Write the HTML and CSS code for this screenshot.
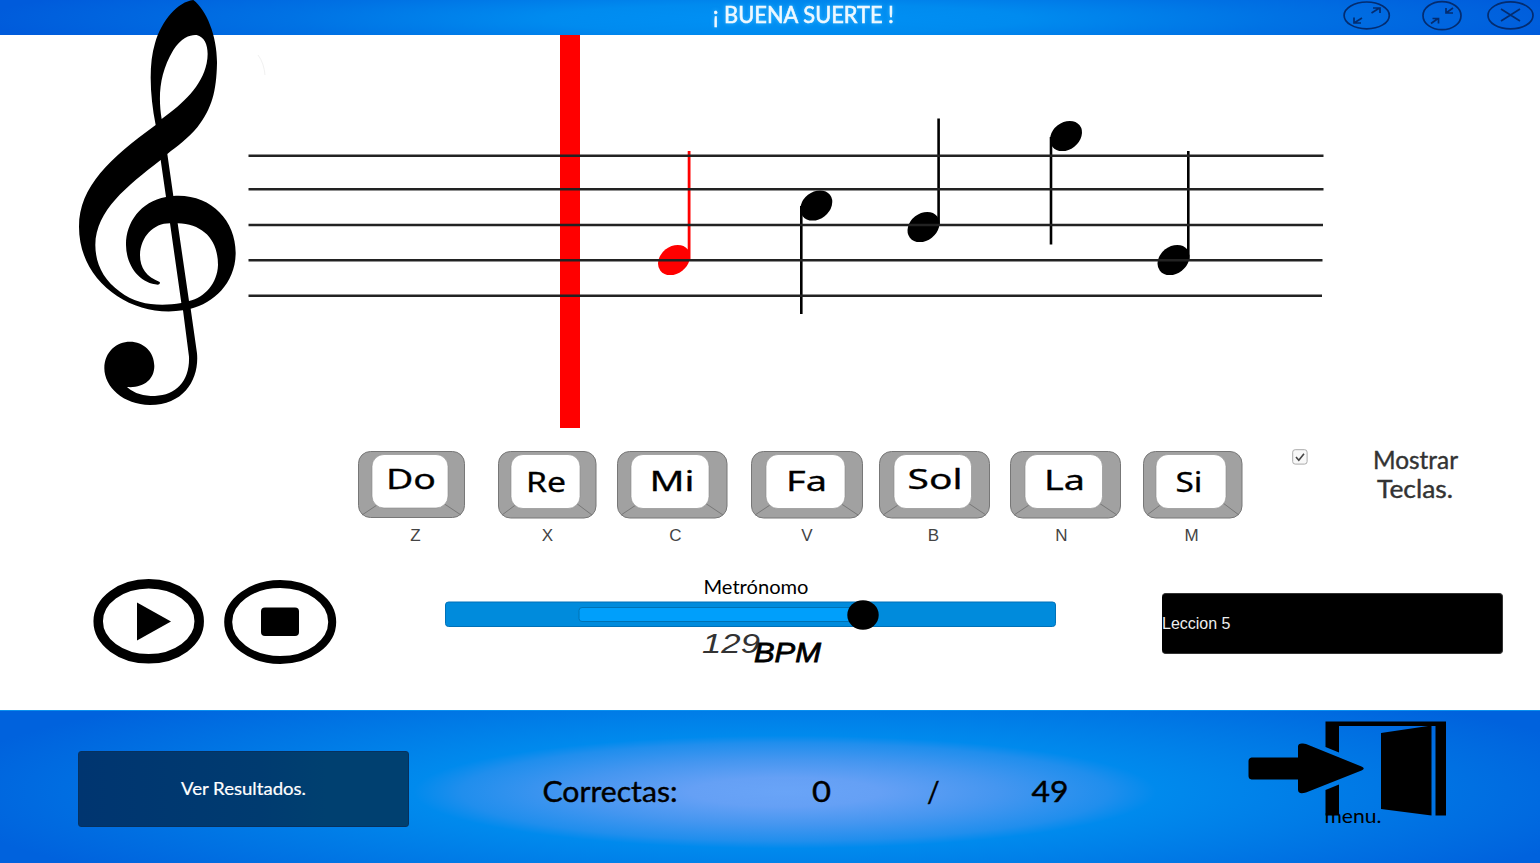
FILE: index.html
```html
<!DOCTYPE html>
<html lang="es">
<head>
<meta charset="utf-8">
<title>Lección de solfeo</title>
<link rel="stylesheet" href="styles.css">
</head>
<body>
<header class="topbar">
  <svg class="title" width="190" height="35" viewBox="709 0 190 35"><text x="713" y="22.5" textLength="181" lengthAdjust="spacingAndGlyphs">¡ BUENA SUERTE !</text></svg>
  <svg class="window-buttons" width="200" height="35" viewBox="1340 0 200 35">
    <ellipse cx="1366.7" cy="15.4" rx="22.6" ry="13.4"/>
    <path d="M1371.500 13l8-5M1373 8h7v5M1362 18l-8 5M1354 17.500v5.500h7"/>
    <ellipse cx="1442" cy="15.700" rx="19" ry="14"/>
    <path d="M1453 8l-7 5M1446 8v5h7M1431 23.500l7-5M1432.500 18.500h6v5"/>
    <ellipse cx="1510.500" cy="15.400" rx="22.500" ry="13.500"/>
    <path d="M1501 9l19 12M1520 9l-19 12"/>
  </svg>
</header>
<main>
  <svg class="score" width="1540" height="405" viewBox="0 35 1540 405">
    <rect x="560" y="35" width="20" height="393" fill="#f00"/>
    <path class="clef" transform="scale(.33333) translate(180 0)" fill-rule="evenodd" d="M400 0C440 30 472 110 471 190C469 275 456 325 412 382C385 415 350 440 322 462L340 588C450 580 528 660 527 760C526 850 460 910 392 926L411 1060C418 1135 375 1215 270 1215C190 1215 133 1160 133 1105C133 1055 170 1025 210 1025C250 1025 283 1055 283 1098C283 1139 250 1165 201 1161C225 1182 250 1188 285 1188C350 1186 390 1140 387 1070L369 931C220 955 57 850 57 680C57 560 150 475 287 375C270 290 265 195 285 130C305 60 355 5 400 0ZM305 357C294 290 298 220 340 150C365 110 395 103 410 105C440 112 448 150 440 190C425 260 370 310 305 357ZM302 480L318 591C240 605 197 670 198 735C199 800 240 850 294 854Q302 852 299 846C260 830 240 805 240 765C242 710 280 670 330 670L364 909C300 920 230 915 180 875C130 840 106 790 106 735C108 630 200 560 302 480ZM353 670C430 672 474 720 474 795C472 850 435 892 387 903Z"/>
    <g>
      <g fill="#f00"><ellipse transform="translate(674 260) rotate(-38)" rx="17.300" ry="13.500"/><path d="M687.700 151h2.800v108h-2.800z"/></g>
      <ellipse transform="translate(816.300 205.500) rotate(-38)" rx="17.300" ry="13.500"/><path d="M800 206h2.600v108H800z"/>
      <ellipse transform="translate(923.500 227) rotate(-38)" rx="17.300" ry="13.500"/><path d="M937.300 118.500h2.600V226h-2.600z"/>
      <ellipse transform="translate(1066 136) rotate(-38)" rx="17.300" ry="13.500"/><path d="M1049.700 137h2.600v107.500h-2.600z"/>
      <ellipse transform="translate(1173.500 260) rotate(-38)" rx="17.300" ry="13.500"/><path d="M1187 151h2.600v108h-2.600z"/>
    </g>
    <path class="staff" d="M248.500 155.800H1323.500M248.500 189.300H1323.500M248.500 225H1323M248.500 260.300H1322.500M248.500 295.700H1322"/>
    <path d="M258 55q6 8 7 20" fill="none" stroke="#f1f1f1"/>
  </svg>

  <section class="keys">
    <div class="key k-do"><svg width="107" height="68" viewBox="0 0 107 68"><rect class="cap" x=".5" y=".5" width="106" height="66" rx="12"/><path class="edge" d="M4 64l18-12M103 64l-18-12"/><rect class="face" x="14" y="3.500" width="76" height="53.500" rx="12"/><text x="28" y="38" textLength="50" lengthAdjust="spacingAndGlyphs">Do</text></svg><span>Z</span></div>
    <div class="key k-re"><svg width="99" height="68" viewBox="0 0 99 68"><rect class="cap" x=".5" y=".5" width="97.500" height="66.500" rx="12"/><path class="edge" d="M4 64l16-12M94 64l-16-12"/><rect class="face" x="13" y="3.500" width="69" height="54" rx="12"/><text x="28" y="41" textLength="40" lengthAdjust="spacingAndGlyphs">Re</text></svg><span>X</span></div>
    <div class="key k-mi"><svg width="111" height="68" viewBox="0 0 111 68"><rect class="cap" x=".5" y=".5" width="109.500" height="66.500" rx="12"/><path class="edge" d="M4 64l18-12M106 64l-18-12"/><rect class="face" x="14" y="3.500" width="78" height="54" rx="12"/><text x="32.500" y="39.500" textLength="45" lengthAdjust="spacingAndGlyphs">Mi</text></svg><span>C</span></div>
    <div class="key k-fa"><svg width="112" height="68" viewBox="0 0 112 68"><rect class="cap" x=".5" y=".5" width="111" height="66.500" rx="12"/><path class="edge" d="M4 64l18-12M107 64l-18-12"/><rect class="face" x="15" y="3.500" width="79" height="54" rx="12"/><text x="35" y="40" textLength="41" lengthAdjust="spacingAndGlyphs">Fa</text></svg><span>V</span></div>
    <div class="key k-sol"><svg width="111" height="68" viewBox="0 0 111 68"><rect class="cap" x=".5" y=".5" width="110" height="66.500" rx="12"/><path class="edge" d="M4 64l18-12M107 64l-18-12"/><rect class="face" x="15" y="3.500" width="77.500" height="54" rx="12"/><text x="28.500" y="38" textLength="55" lengthAdjust="spacingAndGlyphs">Sol</text></svg><span>B</span></div>
    <div class="key k-la"><svg width="111" height="68" viewBox="0 0 111 68"><rect class="cap" x=".5" y=".5" width="110" height="66.500" rx="12"/><path class="edge" d="M4 64l18-12M107 64l-18-12"/><rect class="face" x="15" y="3.500" width="77.500" height="54" rx="12"/><text x="34" y="39" textLength="41" lengthAdjust="spacingAndGlyphs">La</text></svg><span>N</span></div>
    <div class="key k-si"><svg width="100" height="68" viewBox="0 0 100 68"><rect class="cap" x=".5" y=".5" width="98.500" height="66.500" rx="12"/><path class="edge" d="M4 64l16-12M96 64l-16-12"/><rect class="face" x="13" y="3.500" width="70" height="54" rx="12"/><text x="32.500" y="40.500" textLength="27" lengthAdjust="spacingAndGlyphs">Si</text></svg><span>M</span></div>
    <svg class="check" width="16" height="16" viewBox="0 0 16 16"><rect x=".7" y=".7" width="14.400" height="14.400" rx="2.500"/><path d="M4 8l2.800 3.200L12 4.700"/></svg>
    <svg class="show-keys" width="90" height="60" viewBox="1370 444 90 60"><text x="1373" y="469" textLength="85" lengthAdjust="spacingAndGlyphs">Mostrar</text><text x="1377" y="498" textLength="76" lengthAdjust="spacingAndGlyphs">Teclas.</text></svg>
  </section>

  <section class="controls">
    <svg class="play" width="112" height="86" viewBox="93 579 112 86"><ellipse cx="148.700" cy="621.300" rx="50.500" ry="37.500" fill="#fff" stroke="#000" stroke-width="9.500"/><path d="M137 602.500L171 621.500L137 640.500Z"/></svg>
    <svg class="stop" width="114" height="86" viewBox="224 579 114 86"><ellipse cx="280.200" cy="622" rx="52" ry="38" fill="#fff" stroke="#000" stroke-width="8"/><rect x="261" y="607.500" width="38" height="28.500" rx="4"/></svg>
    <div class="metronome">
      <svg width="106" height="24" viewBox="703 576 106 24"><text x="703.500" y="594" font-size="19.500" textLength="105" lengthAdjust="spacingAndGlyphs">Metrónomo</text></svg>
      <svg class="slider" width="611" height="32" viewBox="445 599 611 32"><rect x="445.500" y="602" width="610" height="24.500" rx="3" fill="#008bdc" stroke="#0071b8"/><rect x="579" y="607.500" width="290" height="14" rx="3" fill="#009ffb" stroke="#0072b4"/><ellipse cx="863" cy="615" rx="15.700" ry="14.800"/></svg>
      <svg class="tempo" width="130" height="44" viewBox="698 625 130 44"><text x="703" y="653" fill="#333" font-size="28" textLength="58" lengthAdjust="spacingAndGlyphs">129</text><text x="755" y="662" font-size="28" stroke="#000" stroke-width=".8" textLength="67" lengthAdjust="spacingAndGlyphs">BPM</text></svg>
    </div>
    <div class="lesson">Leccion 5</div>
  </section>
</main>
<footer>
  <button class="results"><svg width="126" height="26" viewBox="180 776 126 26"><text x="180" y="795" font-size="18" textLength="125" lengthAdjust="spacingAndGlyphs">Ver Resultados.</text></svg></button>
  <svg class="tally" width="530" height="40" viewBox="541 772 530 40"><g font-size="28"><text x="542.500" y="802" textLength="135" lengthAdjust="spacingAndGlyphs">Correctas:</text><text x="812" y="802" textLength="19" lengthAdjust="spacingAndGlyphs">0</text><text x="927" y="802">/</text><text x="1031.500" y="802" textLength="37" lengthAdjust="spacingAndGlyphs">49</text></g></svg>
  <svg class="exit" width="200" height="110" viewBox="1248 720 200 110">
    <path d="M1325.500 721.500H1446V815.500H1435.500V726H1339V752.500L1325.500 747Z"/>
    <path d="M1325.500 790L1339 784.500V815.500H1325.500Z"/>
    <path d="M1381 733L1431.500 725.500V815.500L1381 809Z"/>
    <path d="M1251.500 757.500H1298V746.500Q1298 743 1303 743.500L1306 744L1361.500 766.500Q1366 768.500 1361.500 770.500L1306 792.500Q1298 795 1298 789.500V779.500H1251.500Q1248.500 779 1248.500 776V761Q1248.500 758 1251.500 757.500Z"/>
    <text x="1324.500" y="823" font-size="20" textLength="57" lengthAdjust="spacingAndGlyphs">menu.</text>
  </svg>
</footer>
</body>
</html>
```
FILE: styles.css
```css
* { box-sizing: border-box; }
body {
  margin: 0;
  width: 1540px;
  height: 863px;
  overflow: hidden;
  background: #fff;
  font-family: Lato, "Liberation Sans", sans-serif;
}
svg { display: block; flex: none; overflow: visible; }
.topbar {
  display: flex;
  justify-content: space-between;
  height: 35px;
  padding-left: 709px;
  background: radial-gradient(ellipse 800px 50px at 785px 19px, #0091f5, #008bef 30%, #0072e4 62%, #005bdb);
}
.title {
  fill: #eef8ff;
  stroke: #eef8ff;
  stroke-width: .6;
  font-size: 23px;
  filter: drop-shadow(0 0 2px #35b5ff);
}
.window-buttons { fill: none; stroke: #032c70; stroke-width: 1.7; }

main { height: 675px; }
.staff { fill: none; stroke: #222; stroke-width: 2.6; }

.keys { display: flex; height: 130px; padding: 11px 0 0 358px; }
.key { display: flex; flex-direction: column; align-items: center; }
.key text {
  font: 27px "Noto Sans", sans-serif;
  stroke: #000;
  stroke-width: .3;
}
.key span {
  padding-top: 8px;
  font: 17px/18px "Liberation Sans", sans-serif;
  color: #444;
}
.cap { fill: #a1a1a1; stroke: #777; stroke-width: 1; }
.edge { fill: none; stroke: #777; stroke-width: 1; }
.face { fill: #fff; stroke: #888; stroke-width: .6; }
.k-do span { padding-left: 8px; }
.k-re { margin-left: 33px; }
.k-mi { margin-left: 20px; }
.k-mi span { padding-left: 6px; }
.k-fa { margin-left: 23px; }
.k-sol { margin-left: 16px; }
.k-sol span { padding-right: 2px; }
.k-la { margin-left: 20px; }
.k-la span { padding-right: 8px; }
.k-si { margin-left: 22px; }
.k-si span { padding-right: 3px; }
.check { margin: -2px 0 0 49px; fill: #f8f8f8; stroke: #aaa; }
.check path { fill: none; stroke: #444; stroke-width: 1.6; }
.show-keys {
  margin: -7px 0 0 62px;
  fill: #333;
  stroke: #333;
  stroke-width: .4;
  font-size: 25px;
}

.controls { display: flex; padding: 9px 0 0 93px; }
.stop { margin-left: 19px; }
.metronome {
  display: flex;
  flex-direction: column;
  align-items: center;
  width: 611px;
  margin: -3px 0 0 107px;
}
.metronome svg:first-child { margin-left: 11px; }
.slider { margin-top: -1px; }
.tempo {
  margin: -6px 0 0 22px;
  font-family: "Liberation Sans", sans-serif;
  font-style: italic;
}
.lesson {
  width: 341px;
  height: 61px;
  margin: 14px 0 0 106px;
  border: 1px solid #333;
  border-left-width: 0;
  border-radius: 4px;
  background: #000;
  color: #eee;
  font: 16px/60px "Liberation Sans", sans-serif;
}

footer {
  display: flex;
  height: 153px;
  border-top: 1px solid #0a90ee;
  background: radial-gradient(ellipse 790px 120px at 785px 81px, #69a4f7 0, #65a0f5 12%, #4596f0 27%, #208eed 41%, #008aed 47%, #0078e5 75%, #0062dd 108%);
}
.results {
  display: flex;
  align-items: center;
  justify-content: center;
  width: 331px;
  height: 76px;
  margin: 40px 0 0 78px;
  padding: 0;
  border: 1px solid #06315f;
  border-radius: 3px;
  background: linear-gradient(90deg, #003570, #003b70 55%, #004070 75%);
  font-family: inherit;
}
.results svg { fill: #fff; stroke: #fff; stroke-width: .2; }
.tally { margin: 61px 0 0 132px; stroke: #000; stroke-width: .4; }
.exit { margin: 9px 0 0 177px; }
```
